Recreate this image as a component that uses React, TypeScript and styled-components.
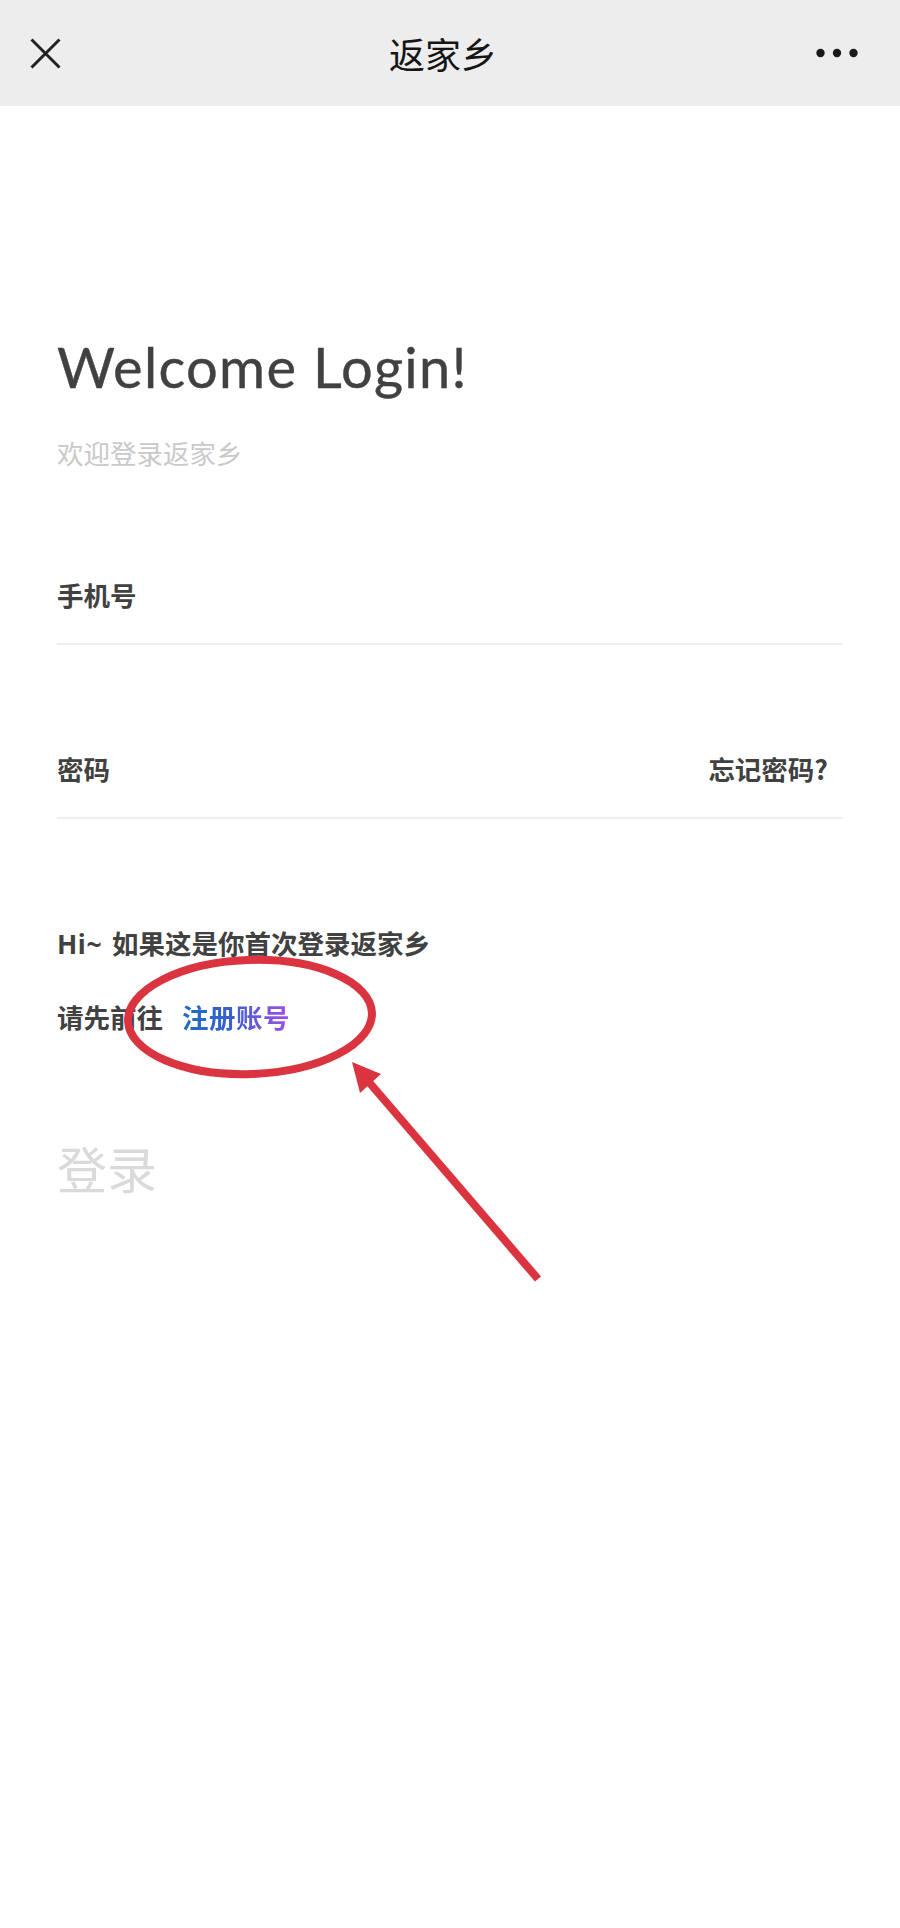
import React from "react";
import styled, { createGlobalStyle } from "styled-components";

const GlobalStyle = createGlobalStyle`
  html, body {
    margin: 0;
    padding: 0;
    background: #ffffff;
  }
  body {
    font-family: "Noto Sans CJK SC", "Noto Sans", sans-serif;
  }
  * { box-sizing: border-box; }
`;

const Page = styled.div`
  position: relative;
  width: 900px;
  min-height: 1928px;
  background: #ffffff;
`;

const NavBar = styled.header`
  height: 106px;
  background: #ededed;
  display: grid;
  grid-template-columns: 90px 1fr 104px;
  align-items: center;
`;

const NavButton = styled.button<{ $align: "start" | "end" }>`
  border: 0;
  background: transparent;
  padding: 0;
  margin: 0;
  height: 106px;
  display: flex;
  align-items: center;
  justify-content: ${(p) => (p.$align === "start" ? "flex-start" : "flex-end")};
  padding-left: ${(p) => (p.$align === "start" ? "30px" : "0")};
  padding-right: ${(p) => (p.$align === "end" ? "42px" : "0")};
  cursor: pointer;
`;

const NavTitle = styled.h1`
  margin: 0;
  text-align: center;
  font-family: "Noto Sans CJK SC", sans-serif;
  font-weight: 400;
  font-size: 36px;
  line-height: 50px;
  color: #151515;
`;

const Main = styled.main`
  padding: 227px 57px 0;
`;

const Welcome = styled.h2`
  margin: 0;
  font-family: Lato, "Open Sans", sans-serif;
  font-weight: 400;
  font-size: 56px;
  line-height: 67px;
  letter-spacing: 1.3px;
  color: #414141;
  -webkit-text-stroke: 0.4px #414141;
`;

const Subtitle = styled.p`
  margin: 35px 0 0;
  font-size: 26.5px;
  line-height: 36px;
  color: #c9c9c9;
`;

const Field = styled.div`
  display: flex;
  align-items: center;
  justify-content: space-between;
  padding: 106px 15px 30px 0;
  border-bottom: 2px solid #efefef;
`;

const FieldLabel = styled.label`
  font-size: 26.5px;
  line-height: 36px;
  font-weight: 700;
  color: #414141;
`;

const FieldLink = styled.a`
  font-size: 26.5px;
  line-height: 36px;
  font-weight: 700;
  color: #414141;
  text-decoration: none;
`;

const Hint = styled.div`
  margin-top: 107px;
  display: flex;
  flex-direction: column;
  gap: 38px;
`;

const HintLine = styled.p`
  margin: 0;
  font-size: 26.5px;
  line-height: 36px;
  font-weight: 700;
  color: #414141;
  font-family: "Noto Sans", "Noto Sans CJK SC", sans-serif;
`;

const Greeting = styled.span`
  letter-spacing: 0.6px;
  margin-right: 3px;
`;

const RegisterLink = styled.a`
  margin-left: 19px;
  font-weight: 700;
  letter-spacing: 0.5px;
  text-decoration: none;
  background: linear-gradient(90deg, #1a6fc1 0%, #3a5fd0 45%, #a150e8 100%);
  -webkit-background-clip: text;
  background-clip: text;
  color: transparent;
`;

const LoginButton = styled.button`
  margin-top: 100px;
  padding: 0;
  border: 0;
  background: transparent;
  font-family: "Noto Sans CJK SC", sans-serif;
  font-size: 50px;
  line-height: 62px;
  font-weight: 400;
  color: #dadada;
  cursor: pointer;
`;

const Annotation = styled.svg`
  position: absolute;
  left: 0;
  top: 0;
  pointer-events: none;
`;

export default function App() {
  return (
    <Page>
      <GlobalStyle />
      <NavBar>
        <NavButton $align="start" aria-label="关闭">
          <svg width="31" height="31" viewBox="0 0 31 31">
            <path d="M1.5 1.5 L29.5 29.5 M29.5 1.5 L1.5 29.5" stroke="#222" strokeWidth="3" fill="none" />
          </svg>
        </NavButton>
        <NavTitle>返家乡</NavTitle>
        <NavButton $align="end" aria-label="更多">
          <svg width="42" height="10" viewBox="0 0 42 10">
            <circle cx="4.5" cy="5" r="4.2" fill="#1a1a1a" />
            <circle cx="21" cy="5" r="4.2" fill="#1a1a1a" />
            <circle cx="37.5" cy="5" r="4.2" fill="#1a1a1a" />
          </svg>
        </NavButton>
      </NavBar>
      <Main>
        <Welcome>Welcome Login!</Welcome>
        <Subtitle>欢迎登录返家乡</Subtitle>
        <Field>
          <FieldLabel>手机号</FieldLabel>
        </Field>
        <Field>
          <FieldLabel>密码</FieldLabel>
          <FieldLink href="#">忘记密码?</FieldLink>
        </Field>
        <Hint>
          <HintLine>
            <Greeting>Hi~</Greeting> 如果这是你首次登录返家乡
          </HintLine>
          <HintLine>
            请先前往<RegisterLink href="#">注册账号</RegisterLink>
          </HintLine>
        </Hint>
        <LoginButton>登录</LoginButton>
      </Main>
      <Annotation width="900" height="1928" viewBox="0 0 900 1928">
        <ellipse
          cx="250"
          cy="1017"
          rx="122"
          ry="57"
          fill="none"
          stroke="#d9343f"
          strokeWidth="8"
          transform="rotate(-2 250 1017)"
        />
        <line x1="538" y1="1279" x2="368" y2="1081" stroke="#d9343f" strokeWidth="8" />
        <polygon points="352,1062 381,1074 360,1093" fill="#d9343f" />
      </Annotation>
    </Page>
  );
}
